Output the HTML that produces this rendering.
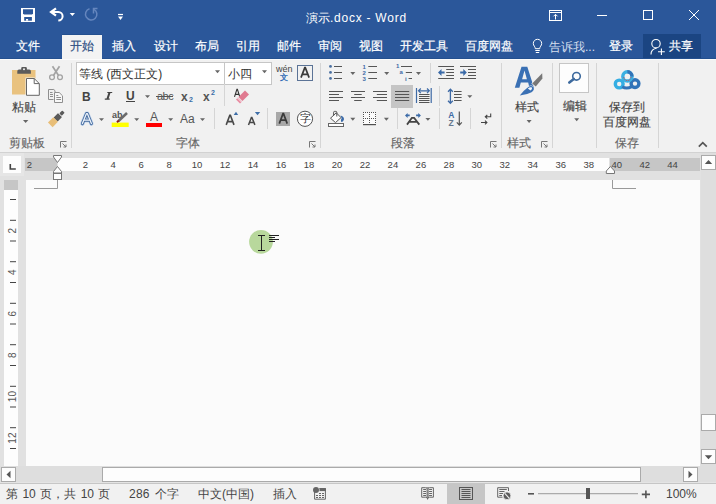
<!DOCTYPE html>
<html><head><meta charset="utf-8">
<style>
*{margin:0;padding:0;box-sizing:border-box}
html,body{width:716px;height:504px;overflow:hidden;background:#f1f1f1;font-family:"Liberation Sans",sans-serif;}
.a{position:absolute}
.t{position:absolute;white-space:nowrap;line-height:1}
#title{left:0;top:0;width:716px;height:59px;background:#2b579a}
.tab{color:#fff;font-size:12px;top:40px;-webkit-text-stroke:0.2px currentColor}
.lbl{color:#666;font-size:12px;-webkit-text-stroke:0.15px currentColor}
.txt{color:#444;font-size:12px;-webkit-text-stroke:0.15px currentColor}
.sep{position:absolute;width:1px;background:#d5d5d5}
.dd{position:absolute;width:0;height:0;border-left:2.5px solid transparent;border-right:2.5px solid transparent;border-top:3px solid #555}
</style></head><body>
<!-- title bar + tabs -->
<div id="title" class="a"></div>
<div class="a" style="left:643px;top:34px;width:58px;height:25px;background:#1b4582"></div>

<div class="a" style="left:0;top:58px;width:716px;height:1px;background:#24508f"></div>


<svg class="a" style="left:0;top:0" width="716" height="58" viewBox="0 0 716 58">
<!-- save -->
<rect x="21" y="8" width="14" height="14" fill="#fff"/>
<path d="M23 9.2H33V13.5L32 14.5H24L23 13.5Z" fill="#2b579a"/>
<rect x="24.2" y="17" width="7.7" height="3.7" fill="#2b579a"/>
<rect x="26" y="19" width="2.1" height="1.7" fill="#fff"/>
<!-- undo -->
<path d="M51.5 12H58.3A4.3 4.3 0 0 1 58.3 20.6" fill="none" stroke="#fff" stroke-width="2"/>
<path d="M56 8.3L51 12L56 15.7" fill="none" stroke="#fff" stroke-width="2.2"/>
<path d="M69.7 13H75L72.35 16Z" fill="#fff"/>
<!-- redo disabled -->
<path d="M89.5 8.8A5.7 5.7 0 1 0 94 9.3" fill="none" stroke="#6586be" stroke-width="1.5"/>
<path d="M93.5 13.5V8.5H97.5" fill="none" stroke="#6586be" stroke-width="1.5"/>
<!-- customize -->
<rect x="118" y="13.9" width="5" height="1.2" fill="#fff"/>
<path d="M118 16.4H123L120.5 20Z" fill="#fff"/>
<!-- ribbon display options -->
<rect x="549.5" y="10.5" width="12" height="10" fill="none" stroke="#fff" stroke-width="1"/>
<path d="M549.5 12.5H561.5" stroke="#fff" stroke-width="1"/>
<path d="M555.5 19.5V14.5M553.5 16.3L555.5 14.3L557.5 16.3" fill="none" stroke="#fff" stroke-width="1"/>
<!-- min / max / close -->
<rect x="597" y="15" width="10" height="1" fill="#fff"/>
<rect x="643.5" y="10.5" width="9" height="9" fill="none" stroke="#fff" stroke-width="1"/>
<path d="M689 10L699 20M699 10L689 20" stroke="#fff" stroke-width="1"/>
<!-- lightbulb -->
<path d="M535.3 48.7C535.3 46.7 533.3 45.7 533.3 43.5A4.2 4.2 0 0 1 541.7 43.5C541.7 45.7 539.7 46.7 539.7 48.7Z" fill="none" stroke="#fff" stroke-width="1"/>
<path d="M535.3 50.5H539.7M535.8 52.5H539.2" stroke="#fff" stroke-width="1"/>
<!-- person -->
<circle cx="656" cy="43.7" r="4.2" fill="none" stroke="#fff" stroke-width="1.1"/>
<path d="M651 54.5A6 6 0 0 1 656.5 48.2" fill="none" stroke="#fff" stroke-width="1.1"/>
<path d="M658 51.8H664.8M661.4 48.6V55" stroke="#fff" stroke-width="1.1"/>
</svg>

<!-- title -->
<div class="t" style="left:306px;top:12px;color:#fff;font-size:12px">演示<span style="letter-spacing:0.75px">.docx - Word</span></div>

<!-- tabs -->
<div class="t tab" style="left:16px">文件</div>
<div class="a" style="left:62px;top:34px;width:40px;height:1px;background:#24508f"></div><div class="a" style="left:62px;top:35px;width:40px;height:24px;background:#f3f3f3"></div>
<div class="t tab" style="left:70px;color:#2f5083">开始</div>
<div class="t tab" style="left:112px">插入</div>
<div class="t tab" style="left:154px">设计</div>
<div class="t tab" style="left:195px">布局</div>
<div class="t tab" style="left:236px">引用</div>
<div class="t tab" style="left:277px">邮件</div>
<div class="t tab" style="left:318px">审阅</div>
<div class="t tab" style="left:359px">视图</div>
<div class="t tab" style="left:400px">开发工具</div>
<div class="t tab" style="left:465px">百度网盘</div>
<div class="t tab" style="left:549px;top:41px;color:#d5dfee;-webkit-text-stroke:0">告诉我...</div>
<div class="t tab" style="left:609px">登录</div>
<div class="t tab" style="left:669px">共享</div>

<!-- ribbon -->
<div class="a" style="left:0;top:59px;width:716px;height:93px;background:#f1f1f1;border-top:1px solid #fbfbfb"></div>
<div class="a" style="left:0;top:152px;width:716px;height:1px;background:#d2d2d2"></div>


<div class="a" style="left:76px;top:62px;width:149px;height:23px;background:#fff;border:1px solid #c6c6c6"></div>
<div class="a" style="left:224px;top:62px;width:48px;height:23px;background:#fff;border:1px solid #c6c6c6"></div>
<!-- ribbon content -->
<svg class="a" style="left:0;top:58px" width="716" height="94" viewBox="0 58 716 94">
<!-- separators -->
<g fill="#d5d5d5">
<rect x="71" y="63" width="1" height="85"/>
<rect x="320" y="63" width="1" height="85"/>
<rect x="501" y="63" width="1" height="85"/>
<rect x="552" y="63" width="1" height="85"/>
<rect x="596" y="63" width="1" height="85"/>
<rect x="658" y="63" width="1" height="85"/>
<rect x="214" y="108" width="1" height="21"/>
<rect x="267" y="108" width="1" height="21"/>
<rect x="224" y="84" width="1" height="22"/>
<rect x="397" y="108" width="1" height="21"/>
<rect x="439" y="108" width="1" height="21"/>
<rect x="470" y="108" width="1" height="21"/>
<rect x="430" y="63" width="1" height="20"/>
<rect x="439" y="86" width="1" height="20"/>
</g>
<!-- paste icon -->
<rect x="12" y="70" width="23.5" height="24.5" fill="#e9c27f"/>
<path d="M17.3 73.8V71.2Q17.3 69.5 19 69.5H21.2V68.2Q21.2 67 22.4 67H25.7Q26.9 67 26.9 68.2V69.5H29.2Q30.9 69.5 30.9 71.2V73.8Z" fill="#5b5b5b"/>
<circle cx="24" cy="69.3" r="1" fill="#f1f1f1"/>
<path d="M25.5 77.5H34.5L40.3 83.2V96.3H25.5Z" fill="#f1f1f1"/>
<path d="M26.5 78.5H34.2L39.3 83.6V95.3H26.5Z" fill="#fff" stroke="#666" stroke-width="1"/>
<path d="M34.2 78.5V83.6H39.3" fill="none" stroke="#666" stroke-width="1"/>
<!-- scissors -->
<g stroke="#a3a3a3" fill="none">
<path d="M52.5 66.2L58.4 75.3M59.5 66.2L53.6 75.3" stroke-width="1.7"/>
<circle cx="52" cy="77.2" r="2.4" stroke-width="1.3"/>
<circle cx="60" cy="77.2" r="2.4" stroke-width="1.3"/>
</g>
<!-- copy -->
<g stroke="#8f8f8f" fill="none" stroke-width="1">
<path d="M53.5 99.5H48.5V89.5H53.8L55 90.7V92"/>
<path d="M50 92.5H52.5M50 94.5H53M50 96.5H53"/>
<path d="M54.5 92.5H59.2L62.5 95.8V102.5H54.5Z" fill="#f8f8f8"/>
<path d="M56.3 95.5H58.3M56.3 97.5H61M56.3 99.5H61"/>
</g>
<!-- format painter -->
<g transform="translate(56.3 118.8) rotate(-45)">
<rect x="6" y="-1.7" width="4.2" height="3.4" rx="0.8" fill="#5a5a5a"/>
<rect x="-1" y="-2.8" width="6.2" height="5.6" rx="0.5" fill="#5a5a5a"/>
<rect x="-8.5" y="-3.3" width="7.5" height="6.6" fill="#e8be78"/>
</g>
<!-- dropdown arrows -->
<g fill="#666">
<path d="M23 120H28.3L25.65 123Z"/>
<path d="M145 95.3H150L147.5 98Z"/>
<path d="M99 118.2H104L101.5 121Z"/>
<path d="M134.2 118.2H139.2L136.7 121Z"/>
<path d="M168.2 118.2H173.2L170.7 121Z"/>
<path d="M200 118.2H205L202.5 121Z"/>
<path d="M350.3 72H355.3L352.8 75Z"/>
<path d="M384.2 72H389.2L386.7 75Z"/>
<path d="M416 72H421L418.5 75Z"/>
<path d="M467.3 95.2H472.3L469.8 98Z"/>
<path d="M350.3 117.8H355.3L352.8 120.8Z"/>
<path d="M383.9 117.8H388.9L386.4 120.8Z"/>
<path d="M425.4 118H430.4L427.9 120.8Z"/>
<path d="M526.6 120H531.6L529.1 123Z"/>
<path d="M574.2 118.3H579.2L576.7 121.2Z"/>
<path d="M215 70.3H220L217.5 73.2Z"/>
<path d="M262 70.3H267L264.5 73.2Z"/>
</g>
<!-- launchers -->
<g fill="none" stroke="#777" stroke-width="1">
<path d="M60.5 147.5V141.5H66.5M62.5 143.5L66 147M66 144.5V147H63.5"/>
<path d="M309.5 147.5V141.5H315.5M311.5 143.5L315 147M315 144.5V147H312.5"/>
<path d="M490.5 147.5V141.5H496.5M492.5 143.5L496 147M496 144.5V147H493.5"/>
<path d="M541.5 147.5V141.5H547.5M543.5 143.5L547 147M547 144.5V147H544.5"/>
</g>
<!-- collapse caret -->
<path d="M698.8 146.6L702.8 142.6L706.8 146.6" fill="none" stroke="#555" stroke-width="1.7"/>
</svg>


<!-- font group glyphs -->
<div class="t" style="left:82px;top:90.5px;font-size:12px;font-weight:bold;color:#444">B</div>

<div class="t" style="left:126px;top:90px;font-size:12px;font-weight:bold;color:#444">U</div>
<div class="a" style="left:126px;top:101px;width:9px;height:1px;background:#444"></div>
<div class="t" style="left:157px;top:91px;font-size:11px;color:#555;letter-spacing:-0.5px">abc</div>
<div class="a" style="left:156px;top:96px;width:17px;height:1px;background:#555"></div>
<div class="t" style="left:181px;top:91px;font-size:12px;font-weight:bold;color:#555">x</div>
<div class="t" style="left:189px;top:96px;font-size:7px;font-weight:bold;color:#3a6ea8">2</div>
<div class="t" style="left:203px;top:91px;font-size:12px;font-weight:bold;color:#555">x</div>
<div class="t" style="left:211px;top:89px;font-size:7px;font-weight:bold;color:#3a6ea8">2</div>

<div class="t" style="left:150px;top:111px;font-size:12px;color:#555">A</div>
<div class="a" style="left:146px;top:123px;width:16px;height:4px;background:#f00"></div>
<div class="t" style="left:180px;top:113px;font-size:12px;color:#555">Aa</div>



<div class="a" style="left:276px;top:112px;width:14px;height:14px;background:#a8a8a8"></div>


<div class="t" style="left:276px;top:65px;font-size:9px;color:#444">wén</div>
<div class="t" style="left:279.5px;top:74px;font-size:8px;color:#2f6cb5;-webkit-text-stroke:0.35px #2f6cb5">文</div>
<div class="a" style="left:297px;top:65px;width:16px;height:16px;border:1.5px solid #5b7396"></div>



<svg class="a" style="left:0;top:58px" width="716" height="94" viewBox="0 58 716 94">
<!-- italic I -->
<path d="M107.3 91.9H112.2V93H107.3ZM104.8 98.6H109.7V99.8H104.8ZM108.5 92.5H110.6L108.4 99.2H106.3Z" fill="#444"/>
<!-- text effects A -->
<path d="M82.4 123.6L86.5 113.6H87.3L91.4 123.6M84 120.2H89.8" fill="none" stroke="#c2d6ee" stroke-width="4.4" stroke-linejoin="round" stroke-linecap="round"/>
<path d="M82.4 123.6L86.5 113.6H87.3L91.4 123.6M84 120.2H89.8" fill="none" stroke="#44699c" stroke-width="3.0" stroke-linejoin="round" stroke-linecap="round"/>
<path d="M82.4 123.6L86.5 113.6H87.3L91.4 123.6M84 120.2H89.8" fill="none" stroke="#eaf2fb" stroke-width="1.3" stroke-linejoin="round" stroke-linecap="round"/>
<!-- highlighter -->
<text x="112" y="117.8" font-family="Liberation Sans" font-size="9" font-weight="bold" fill="#555">ab</text>
<rect x="111.7" y="122.6" width="17" height="4.4" fill="#ffff00"/>
<path d="M127 113L118.5 121" stroke="#6a6a6a" stroke-width="2.6"/>
<path d="M118.8 120.6L117 122.3" stroke="#8a1a1a" stroke-width="2"/>
<!-- A glyphs -->
<g fill="none" stroke="#484848" stroke-linejoin="miter">
<path d="M226.2 124.9L229.8 115.3H230.4L234 124.9M227.5 121.6H232.7" stroke-width="1.6"/>
<path d="M248.5 124.9L251.4 117.5H251.9L254.9 124.9M249.6 122.4H253.8" stroke-width="1.5"/>
<path d="M279.3 123.6L283 113.6H283.5L287.2 123.6M280.6 120.2H285.9" stroke-width="1.7" stroke="#3a3a3a"/>
<path d="M301 77.6L304.8 67.6H305.3L309.1 77.6M302.3 74.3H307.8" stroke-width="1.7" stroke="#3a3a3a"/>
<path d="M234.5 96.9L236.9 89.4H237.4L239.8 96.9M235.4 94.4H238.9" stroke-width="1.1" stroke="#333"/>
</g>
<!-- grow/shrink triangles -->
<path d="M233.7 115H238.2L236 111.8Z" fill="#3e6ea8"/>
<path d="M254.9 112H260.2L257.5 115.3Z" fill="#3e6ea8"/>
<!-- enclosed char circle -->
<circle cx="305" cy="118.8" r="7.6" fill="#fff" stroke="#555" stroke-width="1"/>
<!-- eraser -->
<path d="M238.5 97L245 90.5L249 94.5L242.5 101Z" fill="#e07a90"/>
<path d="M236 99.5L238 97.5L242 101.5L240 103.5Z" fill="#e88aa0"/>
<path d="M237.5 98L241.5 102" stroke="#f6f6f6" stroke-width="0.9"/>
</svg>
<div class="t" style="left:299.5px;top:113px;font-size:11px;color:#333">字</div>


<!-- paragraph group -->
<svg class="a" style="left:0;top:58px" width="716" height="94" viewBox="0 58 716 94">
<!-- justify selected bg -->
<rect x="391" y="85" width="22" height="23" fill="#c5c5c5"/>
<g stroke="#555" stroke-width="1.1" fill="none">
<!-- bullets lines -->
<path d="M334 66.5H342M334 72.5H342M334 78.5H342"/>
<!-- numbering lines -->
<path d="M368.3 66.5H377M368.3 72.5H377M368.3 78.5H377"/>
<!-- multilevel lines -->
<path d="M401 66.5H412M405.8 72.5H412M408.6 78.5H412"/>
<!-- decrease indent -->
<path d="M438.2 66.5H454M446.2 69.5H454M446.2 72.5H454M446.2 75.5H454M438.2 78.5H454"/>
<!-- increase indent -->
<path d="M460 66.5H476M468 69.5H476M468 72.5H476M468 75.5H476M460 78.5H476"/>
<!-- align left -->
<path d="M329 91.5H343M329 94.5H339M329 97.5H343M329 100.5H339"/>
<!-- center -->
<path d="M351 91.5H365M354.2 94.5H361.7M351 97.5H365M354.2 100.5H361.7"/>
<!-- right -->
<path d="M373 91.5H387M376.8 94.5H387M373 97.5H387M376.8 100.5H387"/>
<!-- justify -->
<path d="M395 91.5H409.2M395 94.5H409.2M395 97.5H409.2M395 100.5H409.2"/>
<!-- distributed lines -->
<path d="M419 94.5H429.5M419 96.5H429.5M419 98.5H429.5M419 100.5H429.5M419 102.5H429.5" stroke-width="1"/>
<!-- line spacing lines -->
<path d="M454 91.5H461.6M454 94.5H461.6M454 97.5H461.6M454 100.5H461.6"/>
</g>
<!-- bullet dots -->
<g fill="#4a6fa0">
<circle cx="330.5" cy="66.4" r="1.4"/><circle cx="330.5" cy="72.4" r="1.4"/><circle cx="330.5" cy="78.4" r="1.4"/>
</g>
<!-- numbering numbers -->
<g font-family="Liberation Sans" font-size="6" font-weight="bold" fill="#3e6aa5">
<text x="362.6" y="68.5">1</text><text x="362.6" y="74.5">2</text><text x="362.6" y="80.5">3</text>
<text x="396" y="68.3">1</text><text x="399.6" y="74.3">a</text><text x="404.9" y="80.6">i</text>
</g>
<!-- indent arrows -->
<path d="M438 72.5L441.5 69V71.5H444.6V73.5H441.5V76Z" fill="#3a6aa8"/>
<path d="M466.8 72.5L463.3 69V71.5H460.2V73.5H463.3V76Z" fill="#3a6aa8"/>
<!-- distributed -->
<path d="M416.5 88V103M431.2 88V103" stroke="#3e6aa5" stroke-width="1.2"/>
<path d="M418.5 90.8H429.3M420.8 88.5L418.5 90.8L420.8 93.1M427 88.5L429.3 90.8L427 93.1" fill="none" stroke="#3e6aa5" stroke-width="1.2"/>
<!-- line spacing arrow -->
<path d="M450.4 89.5V103M448 91.8L450.4 89.2L452.8 91.8M448 100.8L450.4 103.4L452.8 100.8" fill="none" stroke="#3e6aa5" stroke-width="1.3"/>
<!-- shading bucket -->
<path d="M336.3 112.8L341 117.6L335.5 122.6L330.5 118.2Z" fill="#fdfdfd" stroke="#555" stroke-width="1"/>
<path d="M333.6 115.8V112.3Q333.6 111.4 334.6 111.4H335.8Q336.8 111.4 336.8 112.3V116.5" fill="none" stroke="#555" stroke-width="1"/>
<path d="M340.6 115.4Q344.6 116.8 343.9 119.8Q343.2 122 341.2 122Q340.4 120 341.6 118.2Z" fill="#3a6aa8"/>
<rect x="328.5" y="123.5" width="15" height="3" fill="#fdfdfd" stroke="#666" stroke-width="1"/>
<!-- borders -->
<rect x="363" y="112" width="13" height="12" fill="#fbfbfb"/>
<g fill="#505050">
<rect x="363" y="112" width="1" height="1"/><rect x="365" y="112" width="1" height="1"/><rect x="367" y="112" width="1" height="1"/><rect x="369" y="112" width="1" height="1"/><rect x="371" y="112" width="1" height="1"/><rect x="373" y="112" width="1" height="1"/><rect x="375" y="112" width="1" height="1"/><rect x="363" y="118" width="1" height="1"/><rect x="365" y="118" width="1" height="1"/><rect x="367" y="118" width="1" height="1"/><rect x="369" y="118" width="1" height="1"/><rect x="371" y="118" width="1" height="1"/><rect x="373" y="118" width="1" height="1"/><rect x="375" y="118" width="1" height="1"/><rect x="363" y="114" width="1" height="1"/><rect x="369" y="114" width="1" height="1"/><rect x="375" y="114" width="1" height="1"/><rect x="363" y="116" width="1" height="1"/><rect x="369" y="116" width="1" height="1"/><rect x="375" y="116" width="1" height="1"/><rect x="363" y="120" width="1" height="1"/><rect x="369" y="120" width="1" height="1"/><rect x="375" y="120" width="1" height="1"/><rect x="363" y="122" width="1" height="1"/><rect x="369" y="122" width="1" height="1"/><rect x="375" y="122" width="1" height="1"/>
<rect x="363" y="124" width="13" height="1.2"/>
</g>
<!-- chinese layout -->
<path d="M405 115.4L407.6 112.9V114.6H409.7V116.2H407.6V117.9Z" fill="#3a6aa8"/>
<path d="M420.9 115.4L418.3 112.9V114.6H416.1V116.2H418.3V117.9Z" fill="#3a6aa8"/>
<path d="M407 124.6L411.9 117.8H414.1L419.3 124.6M409.2 121.9H417.2" fill="none" stroke="#444" stroke-width="1.8"/>
<!-- sort -->
<text x="448.3" y="117.6" font-family="Liberation Sans" font-size="8.5" font-weight="bold" fill="#3e6aa5">A</text>
<text x="448.6" y="125.8" font-family="Liberation Sans" font-size="8.5" font-weight="bold" fill="#66788f">Z</text>
<path d="M459.3 111.5V125M456.8 122.3L459.3 125.2L461.8 122.3" fill="none" stroke="#555" stroke-width="1.2"/>
<!-- show/hide -->
<path d="M490.7 113.4V116.8H485.5M487.3 115L485.3 116.8L487.3 118.6" fill="none" stroke="#444" stroke-width="1.1"/>
<path d="M481 122.5H486.8M485 120.7L486.9 122.5L485 124.3" fill="none" stroke="#444" stroke-width="1.1"/>
</svg>

<!-- combo boxes -->
<div class="t" style="left:79px;top:68px;font-size:12px;color:#333">等线 (西文正文)</div>
<div class="t" style="left:228px;top:68px;font-size:12px;color:#333">小四</div>

<!-- ribbon labels -->
<div class="t txt" style="left:12px;top:101px">粘贴</div>
<div class="t lbl" style="left:9px;top:137px">剪贴板</div>
<div class="t lbl" style="left:176px;top:137px">字体</div>
<div class="t lbl" style="left:391px;top:137px">段落</div>
<div class="t txt" style="left:515px;top:101px">样式</div>
<div class="t lbl" style="left:507px;top:137px">样式</div>
<div class="t txt" style="left:563px;top:100px">编辑</div>
<div class="t txt" style="left:609px;top:101px">保存到</div>
<div class="t txt" style="left:603px;top:116px">百度网盘</div>
<div class="t lbl" style="left:615px;top:137px">保存</div>


<!-- styles / edit / baidu -->
<div class="a" style="left:559px;top:63px;width:30px;height:30px;background:#fdfdfd;border:1px solid #c6c6c6"></div>
<svg class="a" style="left:0;top:58px" width="716" height="94" viewBox="0 58 716 94">
<!-- styles A -->
<path d="M514.8 87.8L521.5 66.8H527.3L534 87.8H529.4L528.2 82.6H520.8L519.4 87.8ZM522.1 79.2H526.9L524.5 70.6Z" fill="#3a70b4" fill-rule="evenodd"/>
<path d="M542.2 73.2L542.4 78.6L535.8 86.6L532.2 83.4Z" fill="#787878" stroke="#f1f1f1" stroke-width="1.2" paint-order="stroke"/>
<path d="M519.8 95.4Q523.5 90.5 528.3 87Q531.5 85 533.4 87.3Q535 89.8 531.5 92.3Q526.5 95.2 519.8 95.4Z" fill="#3a70b4" stroke="#f1f1f1" stroke-width="1.2" paint-order="stroke"/>
<path d="M527.8 88.6Q530.2 86.4 532 87.6Q532.6 89.2 530.6 90.4Z" fill="#f4f8fc"/>
<!-- magnifier -->
<circle cx="576.5" cy="76.3" r="3.8" fill="none" stroke="#3d6a9e" stroke-width="1.6"/>
<path d="M573.8 79L569.3 82.5" stroke="#3d6a9e" stroke-width="2.6" stroke-linecap="round"/>
<!-- baidu cloud -->
<circle cx="619.2" cy="84" r="3.9" fill="none" stroke="#35aee3" stroke-width="3.4"/>
<circle cx="635" cy="83.6" r="3.9" fill="none" stroke="#3274b8" stroke-width="3.4"/>
<path d="M622.2 86.8Q626.5 89.5 631.8 86.6" fill="none" stroke="#3274b8" stroke-width="3"/>
<circle cx="627.4" cy="76.4" r="4.6" fill="none" stroke="#3ab0e2" stroke-width="3.4"/>
<path d="M627.4 71.8A4.6 4.6 0 0 1 632 76.4" fill="none" stroke="#3274b8" stroke-width="3.4"/>
<path d="M623.8 77A3.6 3.6 0 0 0 631 77" fill="none" stroke="#e83a3a" stroke-width="0.9" stroke-dasharray="1 1"/>
</svg>

<!-- ruler area -->

<svg class="a" style="left:0;top:153px" width="716" height="329" viewBox="0 153 716 329">
<rect x="0" y="153" width="716" height="330" fill="#e1e1e1"/>
<!-- tab selector -->
<rect x="0" y="153" width="24" height="23" fill="#e6e6e6"/>
<rect x="3" y="156" width="18" height="17" fill="#fdfdfd"/>
<path d="M10.3 164V169H15.8" fill="none" stroke="#444" stroke-width="1.6"/>
<!-- horizontal ruler -->
<rect x="25" y="158" width="675" height="13" fill="#fdfdfd"/>
<rect x="25" y="158" width="32.5" height="13" fill="#c6c6c6"/>
<rect x="609.5" y="158" width="90.5" height="13" fill="#c6c6c6"/>
<g font-family="Liberation Sans" font-size="9.5" fill="#444">
<text x="85.3" y="168" text-anchor="middle">2</text>
<text x="113.2" y="168" text-anchor="middle">4</text>
<text x="141.2" y="168" text-anchor="middle">6</text>
<text x="169.2" y="168" text-anchor="middle">8</text>
<text x="197.1" y="168" text-anchor="middle">10</text>
<text x="225.1" y="168" text-anchor="middle">12</text>
<text x="253.1" y="168" text-anchor="middle">14</text>
<text x="281.1" y="168" text-anchor="middle">16</text>
<text x="309.0" y="168" text-anchor="middle">18</text>
<text x="337.0" y="168" text-anchor="middle">20</text>
<text x="365.0" y="168" text-anchor="middle">22</text>
<text x="392.9" y="168" text-anchor="middle">24</text>
<text x="420.9" y="168" text-anchor="middle">26</text>
<text x="448.9" y="168" text-anchor="middle">28</text>
<text x="476.8" y="168" text-anchor="middle">30</text>
<text x="504.8" y="168" text-anchor="middle">32</text>
<text x="532.8" y="168" text-anchor="middle">34</text>
<text x="560.8" y="168" text-anchor="middle">36</text>
<text x="588.7" y="168" text-anchor="middle">38</text>
<text x="616.7" y="168" text-anchor="middle">40</text>
<text x="644.7" y="168" text-anchor="middle">42</text>
<text x="672.6" y="168" text-anchor="middle">44</text>
<text x="29.3" y="168" text-anchor="middle">2</text>
</g>
<!-- indent markers -->
<path d="M53.5 155.5H61.5V157L57.5 162.5L53.5 157Z" fill="#fdfdfd" stroke="#777" stroke-width="1"/>
<path d="M57.5 166.5L61.5 171.5V173H53.5V171.5Z" fill="#fdfdfd" stroke="#777" stroke-width="1"/>
<rect x="53.5" y="173.5" width="8" height="6" fill="#fdfdfd" stroke="#777" stroke-width="1"/>
<path d="M610.4 166.5L614.5 171V173.5H606.3V171Z" fill="#fdfdfd" stroke="#777" stroke-width="1"/>
<!-- vertical ruler -->
<rect x="4" y="180" width="14" height="286" fill="#fdfdfd"/>
<rect x="4" y="180" width="14" height="10" fill="#c6c6c6"/>
<g fill="#444">
<rect x="10" y="199.0" width="6" height="1"/>
<rect x="10" y="219.8" width="6" height="1"/>
<rect x="10" y="240.5" width="6" height="1"/>
<rect x="10" y="261.2" width="6" height="1"/>
<rect x="10" y="282.0" width="6" height="1"/>
<rect x="10" y="302.8" width="6" height="1"/>
<rect x="10" y="323.5" width="6" height="1"/>
<rect x="10" y="344.2" width="6" height="1"/>
<rect x="10" y="365.0" width="6" height="1"/>
<rect x="10" y="385.8" width="6" height="1"/>
<rect x="10" y="406.5" width="6" height="1"/>
<rect x="10" y="427.2" width="6" height="1"/>
<rect x="10" y="448.0" width="6" height="1"/>
</g>
<g font-family="Liberation Sans" font-size="10" fill="#555">
<text transform="translate(16.3 230.6) rotate(-90)" text-anchor="middle">2</text>
<text transform="translate(16.3 272.1) rotate(-90)" text-anchor="middle">4</text>
<text transform="translate(16.3 313.6) rotate(-90)" text-anchor="middle">6</text>
<text transform="translate(16.3 355.1) rotate(-90)" text-anchor="middle">8</text>
<text transform="translate(16.3 396.6) rotate(-90)" text-anchor="middle">10</text>
<text transform="translate(16.3 438.1) rotate(-90)" text-anchor="middle">12</text>
</g>
<!-- page -->
<rect x="26" y="180" width="674" height="286" fill="#fbfbfb"/>
<!-- crop marks -->
<path d="M57.5 180V188.5H34" fill="none" stroke="#999" stroke-width="1"/>
<path d="M612.5 180V188.5H636" fill="none" stroke="#999" stroke-width="1"/>
<!-- vertical scrollbar -->
<rect x="701" y="152" width="15" height="330" fill="#dedede"/>
<rect x="701.5" y="155.5" width="14" height="14" fill="#fdfdfd" stroke="#aaa" stroke-width="1"/>
<path d="M704.8 163.9H712.2L708.5 159.9Z" fill="#555"/>
<rect x="701.5" y="414.5" width="14" height="16" fill="#fdfdfd" stroke="#aaa" stroke-width="1"/>
<rect x="701.5" y="449.5" width="14" height="14" fill="#fdfdfd" stroke="#aaa" stroke-width="1"/>
<path d="M704.8 455.3H712.2L708.5 459.3Z" fill="#555"/>
<!-- horizontal scrollbar -->
<rect x="0" y="466" width="701" height="16" fill="#dedede"/>
<rect x="1.5" y="467.5" width="14" height="14" fill="#fdfdfd" stroke="#aaa" stroke-width="1"/>
<path d="M10.5 470.8V478.2L6.5 474.5Z" fill="#555"/>
<rect x="102.5" y="467.5" width="538" height="14" fill="#fdfdfd" stroke="#aaa" stroke-width="1"/>
<rect x="683.5" y="467.5" width="14" height="14" fill="#fdfdfd" stroke="#aaa" stroke-width="1"/>
<path d="M688.5 470.8V478.2L692.5 474.5Z" fill="#555"/>
<!-- cursor -->
<circle cx="261" cy="241.8" r="11.9" fill="#b8d89c"/>
<path d="M258 235.5H265M258 250.5H265M261.5 235.5V250.5" stroke="#222" stroke-width="1"/>
<path d="M269 235.5H279M269 237.5H275M269 239.5H279M269 241.5H275" stroke="#222" stroke-width="1"/>
</svg>


<!-- status bar -->
<div class="a" style="left:0;top:482px;width:716px;height:22px;background:#f1f1f1;border-top:1px solid #e4e4e4"></div>
<div class="a" style="left:0;top:483px;width:716px;height:1px;background:#c6c6c6"></div>
<div class="a" style="left:447px;top:484px;width:38px;height:20px;background:#c6c6c6"></div>
<div class="t" style="left:6px;top:488px;font-size:12px;color:#444;word-spacing:1.1px">第 10 页，共 10 页</div>
<div class="t" style="left:129px;top:488px;font-size:12px;color:#444;word-spacing:1.8px;letter-spacing:0.25px">286 个字</div>
<div class="t" style="left:198px;top:488px;font-size:12px;color:#444">中文(中国)</div>
<div class="t" style="left:273px;top:488px;font-size:12px;color:#444">插入</div>
<div class="t" style="left:666px;top:488px;font-size:12px;color:#444">100%</div>
<svg class="a" style="left:0;top:482px" width="716" height="22" viewBox="0 482 716 22">
<!-- macro icon -->
<path d="M314.6 491V499.2H325.4V488.6H319.5" fill="none" stroke="#666" stroke-width="1"/>
<rect x="319.5" y="488.1" width="6.4" height="3" fill="#666"/>
<circle cx="316" cy="489.9" r="3" fill="#666"/>
<g fill="#666"><rect x="319" y="493" width="2" height="1"/><rect x="322" y="493" width="2" height="1"/>
<rect x="316" y="495" width="2" height="1"/><rect x="319" y="495" width="2" height="1"/><rect x="322" y="495" width="2" height="1"/>
<rect x="316" y="497" width="2" height="1"/><rect x="319" y="497" width="2" height="1"/><rect x="322" y="497" width="2" height="1"/></g>
<!-- read mode -->
<path d="M427.6 488.2L425.5 487.7H421.7V497.2H425.8L427.6 497.7L429.4 497.2H433.4V487.7H429.6Z" fill="none" stroke="#666" stroke-width="1"/>
<path d="M423.2 489.5H426M423.2 491.5H426M423.2 493.5H426M423.2 495.5H426M429.1 489.5H432M429.1 491.5H432M429.1 493.5H432M429.1 495.5H432" stroke="#666" stroke-width="1"/>
<path d="M426.6 487.5H428.6V498L427.6 500L426.6 498Z" fill="#666"/>
<path d="M427.6 488.5V498" stroke="#f1f1f1" stroke-width="0.6" stroke-dasharray="0.9 1.1"/>
<!-- print layout -->
<rect x="459.5" y="487.5" width="13" height="12" fill="none" stroke="#555" stroke-width="1"/>
<path d="M461.5 489.5H470.5M461.5 491.5H470.5M461.5 493.5H470.5M461.5 495.5H470.5M461.5 497.5H470.5" stroke="#555" stroke-width="1"/>
<!-- web layout -->
<path d="M508.5 491V487.7H497.7V497.2H502.5" fill="none" stroke="#666" stroke-width="1"/>
<path d="M499.3 489.5H506.8M499.3 491.5H504.5M499.3 493.5H503M499.3 495.5H502" stroke="#666" stroke-width="1"/>
<circle cx="507" cy="495.8" r="3.9" fill="#5e5e5e" stroke="#f1f1f1" stroke-width="0.8"/>
<path d="M504.8 493.3L509.3 498.3" stroke="#eee" stroke-width="1.1"/>
<!-- zoom -->
<rect x="528" y="493" width="6" height="1.6" fill="#555"/>
<rect x="538" y="493.2" width="100" height="1" fill="#999"/>
<rect x="586" y="488" width="4" height="11" fill="#555"/>
<path d="M641.8 494.4H650M645.9 490.5V498.3" stroke="#555" stroke-width="1.6"/>
</svg>

</body></html>
